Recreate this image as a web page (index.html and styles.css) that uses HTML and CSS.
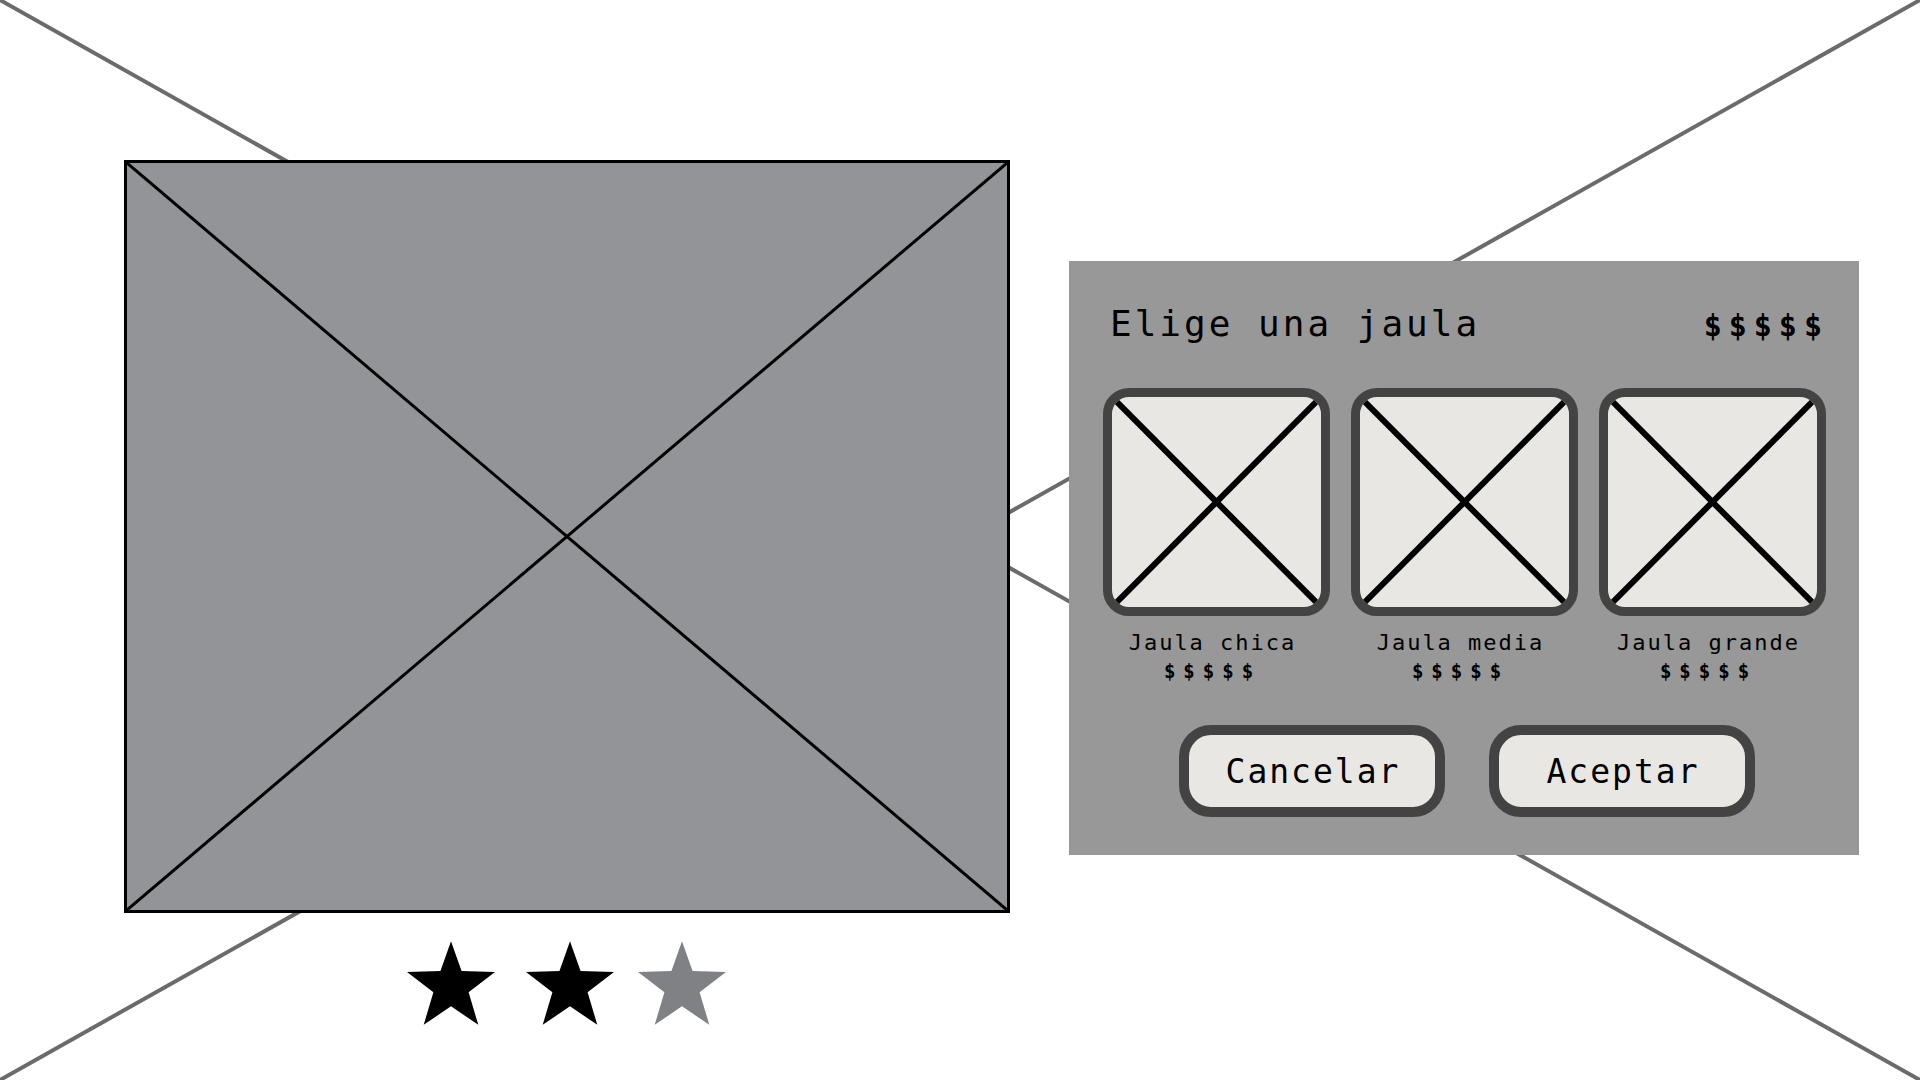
FILE: index.html
```html
<!DOCTYPE html>
<html lang="es">
<head>
  <meta charset="UTF-8" />
  <meta name="viewport" content="width=device-width, initial-scale=1.0"/>
  <title>Elige una jaula</title>
  <link rel="stylesheet" href="styles.css">
</head>
<body>

  <svg class="backdrop" viewBox="0 0 1920 1080" preserveAspectRatio="none">
    <line x1="0" y1="0" x2="1920" y2="1080" />
    <line x1="1920" y1="0" x2="0" y2="1080" />
  </svg>

  <div class="page">
    <div class="product">
      <div class="photo">
        <svg viewBox="0 0 100 100" preserveAspectRatio="none">
          <line x1="0" y1="0" x2="100" y2="100" />
          <line x1="100" y1="0" x2="0" y2="100" />
        </svg>
      </div>
      <div class="stars">
        <svg class="star on" viewBox="0 0 100 95"><polygon points="50,0 62,34 100,35 70,58 81,95 50,74 19,95 30,58 0,35 38,34" /></svg>
        <svg class="star on" viewBox="0 0 100 95"><polygon points="50,0 62,34 100,35 70,58 81,95 50,74 19,95 30,58 0,35 38,34" /></svg>
        <svg class="star off" viewBox="0 0 100 95"><polygon points="50,0 62,34 100,35 70,58 81,95 50,74 19,95 30,58 0,35 38,34" /></svg>
      </div>
    </div>

    <div class="dialog">
      <div class="dialog-head">
        <h2>Elige una jaula</h2>
        <span class="price-big">$$$$$</span>
      </div>

      <div class="cages">
        <div class="cage">
          <div class="cage-img">
            <svg viewBox="0 0 100 100" preserveAspectRatio="none">
              <line x1="0" y1="0" x2="100" y2="100" />
              <line x1="100" y1="0" x2="0" y2="100" />
            </svg>
          </div>
          <p class="cage-name">Jaula chica</p>
          <p class="cage-price">$$$$$</p>
        </div>
        <div class="cage">
          <div class="cage-img">
            <svg viewBox="0 0 100 100" preserveAspectRatio="none">
              <line x1="0" y1="0" x2="100" y2="100" />
              <line x1="100" y1="0" x2="0" y2="100" />
            </svg>
          </div>
          <p class="cage-name">Jaula media</p>
          <p class="cage-price">$$$$$</p>
        </div>
        <div class="cage">
          <div class="cage-img">
            <svg viewBox="0 0 100 100" preserveAspectRatio="none">
              <line x1="0" y1="0" x2="100" y2="100" />
              <line x1="100" y1="0" x2="0" y2="100" />
            </svg>
          </div>
          <p class="cage-name">Jaula grande</p>
          <p class="cage-price">$$$$$</p>
        </div>
      </div>

      <div class="actions">
        <button class="btn">Cancelar</button>
        <button class="btn">Aceptar</button>
      </div>
    </div>
  </div>

</body>
</html>
```

FILE: styles.css
```css
html, body {
margin: 0;
padding: 0;
}

body {
position: relative;
width: 1920px;
height: 1080px;
overflow: hidden;
background-color: #ffffff;
font-family: "DejaVu Sans Mono", "Liberation Mono", monospace;
color: #000;
}

/* big crossed placeholder behind everything */
.backdrop {
position: absolute;
top: 0;
left: 0;
width: 1920px;
height: 1080px;
z-index: 0;
}

.backdrop line {
stroke: #6b6b6b;
stroke-width: 4;
vector-effect: non-scaling-stroke;
}

.page {
position: relative;
z-index: 1;
display: flex;
align-items: flex-start;
padding: 160px 0 0 124px;
}

.product {
display: flex;
flex-direction: column;
}

.photo {
width: 880px;
height: 747px;
border: 3px solid #000;
background-color: #939498;
}

.photo svg {
display: block;
width: 100%;
height: 100%;
}

.photo line {
stroke: #000;
stroke-width: 3;
vector-effect: non-scaling-stroke;
}

.stars {
display: flex;
margin-top: 28px;
padding-left: 283px;
}

.star {
width: 88px;
height: 84px;
}

.star + .star {
margin-left: 31px;
}

.star.off {
margin-left: 24px;
}

.star.on {
fill: #000;
}

.star.off {
fill: #808185;
}

.dialog {
display: flex;
flex-direction: column;
box-sizing: border-box;
width: 790px;
height: 594px;
margin: 101px 0 0 59px;
padding: 41px 0 0 34px;
background-color: #989898;
}

.dialog-head {
display: flex;
justify-content: space-between;
align-items: baseline;
padding: 0 37px 0 7px;
}

.dialog-head h2 {
margin: 0;
font-size: 36px;
line-height: 44px;
font-weight: normal;
letter-spacing: 3px;
}

.price-big {
font-size: 30px;
font-weight: bold;
letter-spacing: 7px;
margin-right: -7px;
}

.cages {
display: flex;
gap: 21px;
margin-top: 42px;
}

.cage {
display: flex;
flex-direction: column;
align-items: center;
width: 227px;
}

.cage-img {
width: 209px;
height: 210px;
border: 9px solid #434343;
border-radius: 26px;
background-color: #e8e7e3;
overflow: hidden;
}

.cage-img svg {
display: block;
width: 100%;
height: 100%;
}

.cage-img line {
stroke: #000;
stroke-width: 6;
vector-effect: non-scaling-stroke;
}

.cage-name {
margin: 15px 0 0 -8px;
font-size: 22px;
line-height: 24px;
letter-spacing: 2px;
}

.cage-price {
margin: 5px 0 0 -8px;
font-size: 19px;
line-height: 22px;
font-weight: bold;
letter-spacing: 8px;
}

.actions {
display: flex;
gap: 44px;
margin-top: 43px;
padding-left: 76px;
}

.btn {
box-sizing: border-box;
width: 266px;
height: 92px;
padding: 0 0 0 2px;
border: 10px solid #434343;
border-radius: 32px;
background-color: #e8e7e3;
font-family: "DejaVu Sans Mono", "Liberation Mono", monospace;
font-size: 33px;
letter-spacing: 2px;
color: #000;
}
```
